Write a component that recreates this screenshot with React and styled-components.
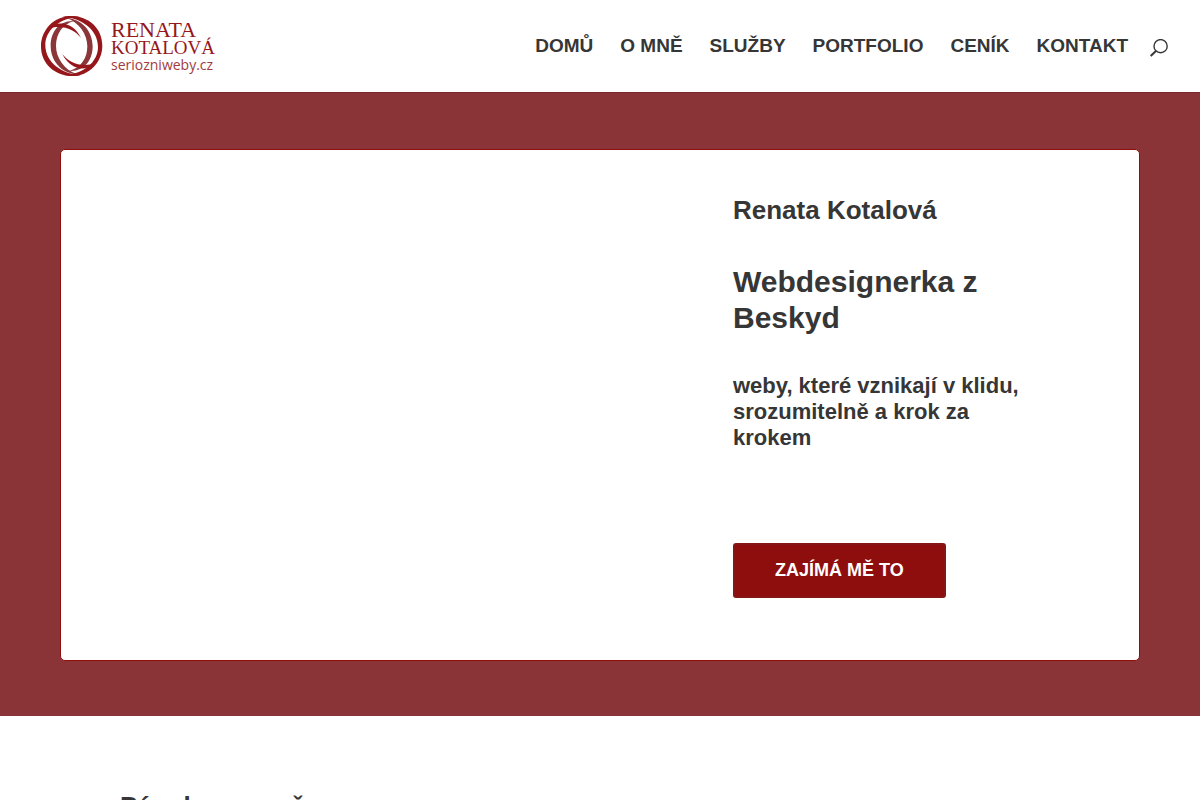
import React from 'react';
import styled, { createGlobalStyle } from 'styled-components';

const COLORS = {
  text: '#363636',
  wine: '#8a3437',
  red: '#8e0e0e',
  logo: '#96171b',
};

const GlobalStyle = createGlobalStyle`
  * {
    box-sizing: border-box;
  }

  body {
    margin: 0;
    background: #fff;
    color: ${COLORS.text};
    font-family: "Liberation Sans", Arial, sans-serif;
    font-weight: 700;
    overflow-x: hidden;
  }
`;

const Header = styled.header`
  display: flex;
  justify-content: space-between;
  height: 92px;
  padding: 0 32px 0 36px;
  background: #fff;
`;

const LogoLink = styled.a`
  display: flex;
  align-items: center;
`;

const Nav = styled.nav`
  display: flex;
  align-items: center;
  gap: 22px;
`;

const Menu = styled.ul`
  display: flex;
  gap: 27px;
  margin: 0;
  padding: 0;
  list-style: none;
`;

const MenuLink = styled.a`
  color: ${COLORS.text};
  font-size: 19px;
  line-height: 20px;
  text-decoration: none;
  text-transform: uppercase;
`;

const SearchButton = styled.button`
  display: flex;
  padding: 4px 0 0;
  border: none;
  background: none;
  color: ${COLORS.text};
  cursor: pointer;
`;

const Hero = styled.section`
  padding: 56px 5% 55px;
  border-top: 1px solid #7a2a2e;
  background: ${COLORS.wine};
`;

const HeroCard = styled.div`
  display: grid;
  grid-template-columns: 1fr 306px;
  padding: 44px 100px 62px 0;
  border: 1px solid ${COLORS.red};
  border-radius: 5px;
  background: #fff;
`;

const HeroText = styled.div`
  grid-column: 2;
  display: flex;
  flex-direction: column;
  align-items: flex-start;
`;

const Name = styled.h2`
  margin: 0 0 38px;
  font-size: 26px;
  line-height: 32px;
`;

const Title = styled.h1`
  margin: 0 0 37px;
  font-size: 30px;
  line-height: 36px;
`;

const Lead = styled.h3`
  margin: 0 0 92px;
  font-size: 22px;
  line-height: 26px;
`;

const CtaButton = styled.button`
  padding: 15px 40px;
  border: 2px solid #861517;
  border-radius: 3px;
  background: ${COLORS.red};
  color: #fff;
  font-family: inherit;
  font-size: 18px;
  font-weight: 700;
  line-height: 21px;
  text-transform: uppercase;
  cursor: pointer;
`;

const About = styled.section`
  padding: 74px 10%;
`;

const AboutTitle = styled.h2`
  margin: 0;
  font-size: 26px;
  line-height: 32px;
`;

const LogoName = styled.text`
  fill: ${COLORS.logo};
  font-family: "Liberation Serif", "Times New Roman", serif;
  font-size: ${({ $size }) => $size}px;
  font-weight: 400;
`;

const LogoDomain = styled.text`
  fill: #a33a3d;
  font-family: "Open Sans", "Noto Sans", sans-serif;
  font-size: 14px;
  font-weight: 400;
`;

// One half of the emblem, the other one is the same turned by 180 degrees
const EmblemHalf = () => (
  <>
    <path
      fill="#8b3639"
      d="M132 48C86 46 62 82 62 122c0 44 30 82 80 86-40-14-64-50-64-86 0-34 18-64 54-74z"
    />
    <path
      fill={COLORS.logo}
      d="M150 36C84 20 33 68 33 124c0 52 40 89 95 89 10 0 18-1 24-3C96 208 46 172 46 120c0-44 42-82 104-84z"
    />
    <path fill={COLORS.logo} d="M50 72C84 44 130 52 153 99 130 70 96 58 50 72z" />
  </>
);

const Logo = () => (
  <svg width="184" height="72" viewBox="0 0 184 72" role="img" aria-label="Renata Kotalová">
    <g transform="translate(-6 -5) scale(0.3333)">
      <EmblemHalf />
      <g transform="rotate(180 125 123)">
        <EmblemHalf />
      </g>
    </g>
    <LogoName x="75" y="27" $size="22">RENATA</LogoName>
    <LogoName x="75" y="44" $size="19">KOTALOVÁ</LogoName>
    <LogoDomain x="75" y="60">seriozniweby.cz</LogoDomain>
  </svg>
);

const SearchIcon = () => (
  <svg width="18" height="18" viewBox="0 0 18 18" fill="none" stroke="currentColor" aria-hidden="true">
    <circle cx="10.6" cy="7.2" r="6.6" strokeWidth="1.4" />
    <path d="M6.2 11.8L0.7 17" strokeWidth="2" />
  </svg>
);

const MENU_ITEMS = [
  { label: 'Domů', href: '#domu' },
  { label: 'O mně', href: '#o-mne' },
  { label: 'Služby', href: '#sluzby' },
  { label: 'Portfolio', href: '#portfolio' },
  { label: 'Ceník', href: '#cenik' },
  { label: 'Kontakt', href: '#kontakt' },
];

const App = () => (
  <>
    <GlobalStyle />
    <Header>
      <LogoLink href="#domu">
        <Logo />
      </LogoLink>
      <Nav>
        <Menu>
          {MENU_ITEMS.map(({ label, href }) => (
            <li key={href}>
              <MenuLink href={href}>{label}</MenuLink>
            </li>
          ))}
        </Menu>
        <SearchButton type="button" aria-label="Hledat">
          <SearchIcon />
        </SearchButton>
      </Nav>
    </Header>
    <main>
      <Hero id="domu">
        <HeroCard>
          <HeroText>
            <Name>Renata Kotalová</Name>
            <Title>Webdesignerka z Beskyd</Title>
            <Lead>weby, které vznikají v klidu, srozumitelně a krok za krokem</Lead>
            <CtaButton type="button">Zajímá mě to</CtaButton>
          </HeroText>
        </HeroCard>
      </Hero>
      <About id="o-mne">
        <AboutTitle>Pár slov o mně</AboutTitle>
      </About>
    </main>
  </>
);

export default App;
